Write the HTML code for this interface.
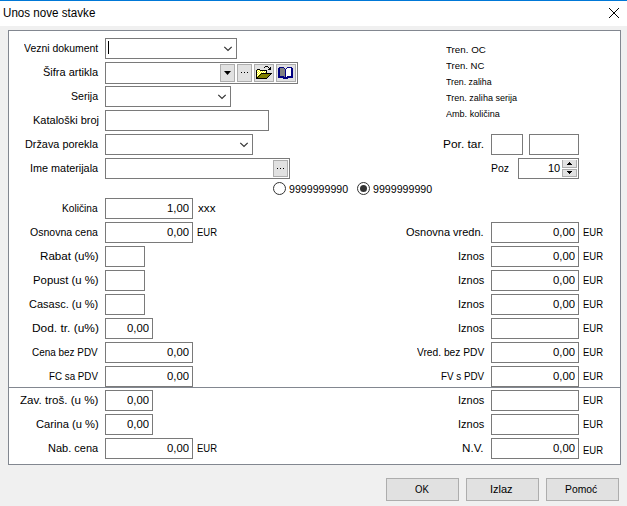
<!DOCTYPE html><html><head><meta charset="utf-8"><style>

*{margin:0;padding:0;box-sizing:border-box}
html,body{width:627px;height:506px;overflow:hidden;background:#f0f0f0;font-family:"Liberation Sans",sans-serif;color:#000}
.abs{position:absolute}
.t{position:absolute;white-space:nowrap;transform-origin:0 0}
.inp{position:absolute;background:#fff;border:1px solid #7a7a7a}
.btn{position:absolute;background:#e1e1e1;border:1px solid #adadad}
.dot{position:absolute;width:1px;height:1px;background:#000}

</style></head><body>
<div class="abs" style="left:0;top:0;width:627px;height:1px;background:#0078d7"></div>
<div class="abs" style="left:0;top:1px;width:627px;height:25px;background:#fff"></div>
<svg class="abs" style="left:609px;top:8px" width="10" height="10" viewBox="0 0 10 10" shape-rendering="crispEdges"><path fill="#000000" d="M0 0h1v1h-1zM1 1h1v1h-1zM2 2h1v1h-1zM3 3h1v1h-1zM4 4h1v1h-1zM5 5h1v1h-1zM6 6h1v1h-1zM7 7h1v1h-1zM8 8h1v1h-1zM9 9h1v1h-1zM9 0h1v1h-1zM8 1h1v1h-1zM7 2h1v1h-1zM6 3h1v1h-1zM5 4h1v1h-1zM4 5h1v1h-1zM3 6h1v1h-1zM2 7h1v1h-1zM1 8h1v1h-1zM0 9h1v1h-1z"/></svg>
<div class="abs" style="left:8px;top:30px;width:613px;height:435px;background:#fff;border:1px solid #828790"></div>
<div class="abs" style="left:8px;top:387px;width:613px;height:1px;background:#828790"></div>
<div class="inp" style="left:105px;top:38px;width:132px;height:21px"></div>
<div class="abs" style="left:108px;top:41px;width:1px;height:13px;background:#000"></div>
<svg class="abs" style="left:223px;top:45px" width="11" height="7" viewBox="0 0 11 7"><path d="M1.3 1.8L5 5.5L8.7 1.8" stroke="#333" stroke-width="1.2" fill="none"/></svg>
<div class="inp" style="left:105px;top:62px;width:193px;height:22px"></div>
<div class="btn" style="left:220px;top:64px;width:15px;height:18px"></div>
<svg class="abs" style="left:224px;top:71px" width="8" height="5" viewBox="0 0 8 5"><path d="M0 0H7L3.5 4Z" fill="#000"/></svg>
<div class="btn" style="left:237px;top:64px;width:15px;height:18px"></div>
<div class="dot" style="left:241px;top:72px"></div>
<div class="dot" style="left:244px;top:72px"></div>
<div class="dot" style="left:247px;top:72px"></div>
<div class="btn" style="left:254px;top:64px;width:20px;height:18px"></div>
<svg class="abs" style="left:255px;top:65px" width="17" height="15" viewBox="0 0 17 15" shape-rendering="crispEdges"><path fill="#000000" d="M2 4h1v1h-1zM3 4h1v1h-1zM4 4h1v1h-1zM1 5h1v1h-1zM5 5h1v1h-1zM6 5h1v1h-1zM7 5h1v1h-1zM8 5h1v1h-1zM9 5h1v1h-1zM10 5h1v1h-1zM11 5h1v1h-1zM1 6h1v1h-1zM11 6h1v1h-1zM1 7h1v1h-1zM11 7h1v1h-1zM1 8h1v1h-1zM6 8h1v1h-1zM7 8h1v1h-1zM8 8h1v1h-1zM9 8h1v1h-1zM10 8h1v1h-1zM11 8h1v1h-1zM12 8h1v1h-1zM13 8h1v1h-1zM14 8h1v1h-1zM15 8h1v1h-1zM16 8h1v1h-1zM1 9h1v1h-1zM5 9h1v1h-1zM15 9h1v1h-1zM1 10h1v1h-1zM4 10h1v1h-1zM14 10h1v1h-1zM1 11h1v1h-1zM3 11h1v1h-1zM13 11h1v1h-1zM1 12h1v1h-1zM2 12h1v1h-1zM12 12h1v1h-1zM1 13h1v1h-1zM2 13h1v1h-1zM3 13h1v1h-1zM4 13h1v1h-1zM5 13h1v1h-1zM6 13h1v1h-1zM7 13h1v1h-1zM8 13h1v1h-1zM9 13h1v1h-1zM10 13h1v1h-1zM11 13h1v1h-1zM10 1h1v1h-1zM11 1h1v1h-1zM12 1h1v1h-1zM9 2h1v1h-1zM13 2h1v1h-1zM15 2h1v1h-1zM14 3h1v1h-1zM15 3h1v1h-1zM13 4h1v1h-1zM14 4h1v1h-1zM15 4h1v1h-1z"/><path fill="#808000" d="M6 9h1v1h-1zM7 9h1v1h-1zM8 9h1v1h-1zM9 9h1v1h-1zM10 9h1v1h-1zM11 9h1v1h-1zM12 9h1v1h-1zM13 9h1v1h-1zM14 9h1v1h-1zM5 10h1v1h-1zM6 10h1v1h-1zM7 10h1v1h-1zM8 10h1v1h-1zM9 10h1v1h-1zM10 10h1v1h-1zM11 10h1v1h-1zM12 10h1v1h-1zM13 10h1v1h-1zM4 11h1v1h-1zM5 11h1v1h-1zM6 11h1v1h-1zM7 11h1v1h-1zM8 11h1v1h-1zM9 11h1v1h-1zM10 11h1v1h-1zM11 11h1v1h-1zM12 11h1v1h-1zM3 12h1v1h-1zM4 12h1v1h-1zM5 12h1v1h-1zM6 12h1v1h-1zM7 12h1v1h-1zM8 12h1v1h-1zM9 12h1v1h-1zM10 12h1v1h-1zM11 12h1v1h-1z"/><path fill="#ffff00" d="M2 5h1v1h-1zM4 5h1v1h-1zM3 6h1v1h-1zM5 6h1v1h-1zM7 6h1v1h-1zM9 6h1v1h-1zM2 7h1v1h-1zM4 7h1v1h-1zM6 7h1v1h-1zM8 7h1v1h-1zM10 7h1v1h-1zM3 8h1v1h-1zM5 8h1v1h-1zM2 9h1v1h-1zM4 9h1v1h-1zM3 10h1v1h-1zM2 11h1v1h-1z"/><path fill="#ffffff" d="M3 5h1v1h-1zM2 6h1v1h-1zM4 6h1v1h-1zM6 6h1v1h-1zM8 6h1v1h-1zM10 6h1v1h-1zM3 7h1v1h-1zM5 7h1v1h-1zM7 7h1v1h-1zM9 7h1v1h-1zM2 8h1v1h-1zM4 8h1v1h-1zM3 9h1v1h-1zM2 10h1v1h-1z"/></svg>
<div class="btn" style="left:276px;top:64px;width:20px;height:18px"></div>
<svg class="abs" style="left:277px;top:66px" width="17" height="14" viewBox="0 0 17 14" shape-rendering="crispEdges"><path fill="#000080" d="M2 1h1v1h-1zM3 1h1v1h-1zM4 1h1v1h-1zM5 1h1v1h-1zM6 1h1v1h-1zM10 1h1v1h-1zM11 1h1v1h-1zM12 1h1v1h-1zM13 1h1v1h-1zM14 1h1v1h-1zM1 2h1v1h-1zM2 2h1v1h-1zM7 2h1v1h-1zM9 2h1v1h-1zM14 2h1v1h-1zM15 2h1v1h-1zM1 3h1v1h-1zM2 3h1v1h-1zM8 3h1v1h-1zM14 3h1v1h-1zM15 3h1v1h-1zM1 4h1v1h-1zM2 4h1v1h-1zM8 4h1v1h-1zM14 4h1v1h-1zM15 4h1v1h-1zM1 5h1v1h-1zM2 5h1v1h-1zM8 5h1v1h-1zM14 5h1v1h-1zM15 5h1v1h-1zM1 6h1v1h-1zM2 6h1v1h-1zM8 6h1v1h-1zM14 6h1v1h-1zM15 6h1v1h-1zM1 7h1v1h-1zM2 7h1v1h-1zM8 7h1v1h-1zM14 7h1v1h-1zM15 7h1v1h-1zM1 8h1v1h-1zM2 8h1v1h-1zM8 8h1v1h-1zM14 8h1v1h-1zM15 8h1v1h-1zM1 9h1v1h-1zM2 9h1v1h-1zM8 9h1v1h-1zM14 9h1v1h-1zM15 9h1v1h-1zM1 10h1v1h-1zM2 10h1v1h-1zM3 10h1v1h-1zM4 10h1v1h-1zM5 10h1v1h-1zM6 10h1v1h-1zM8 10h1v1h-1zM10 10h1v1h-1zM11 10h1v1h-1zM12 10h1v1h-1zM13 10h1v1h-1zM14 10h1v1h-1zM15 10h1v1h-1zM1 11h1v1h-1zM2 11h1v1h-1zM3 11h1v1h-1zM4 11h1v1h-1zM5 11h1v1h-1zM6 11h1v1h-1zM7 11h1v1h-1zM8 11h1v1h-1zM9 11h1v1h-1zM10 11h1v1h-1zM11 11h1v1h-1zM12 11h1v1h-1zM13 11h1v1h-1zM14 11h1v1h-1zM15 11h1v1h-1zM6 12h1v1h-1zM7 12h1v1h-1zM8 12h1v1h-1zM9 12h1v1h-1zM10 12h1v1h-1z"/><path fill="#808080" d="M3 2h1v1h-1zM4 2h1v1h-1zM5 2h1v1h-1zM6 2h1v1h-1zM3 3h1v1h-1zM4 3h1v1h-1zM5 3h1v1h-1zM6 3h1v1h-1zM7 3h1v1h-1zM3 4h1v1h-1zM4 4h1v1h-1zM5 4h1v1h-1zM6 4h1v1h-1zM7 4h1v1h-1zM3 5h1v1h-1zM4 5h1v1h-1zM5 5h1v1h-1zM6 5h1v1h-1zM7 5h1v1h-1zM3 6h1v1h-1zM4 6h1v1h-1zM5 6h1v1h-1zM6 6h1v1h-1zM7 6h1v1h-1zM3 7h1v1h-1zM4 7h1v1h-1zM5 7h1v1h-1zM6 7h1v1h-1zM7 7h1v1h-1zM3 8h1v1h-1zM4 8h1v1h-1zM5 8h1v1h-1zM6 8h1v1h-1zM7 8h1v1h-1zM3 9h1v1h-1zM4 9h1v1h-1zM5 9h1v1h-1zM6 9h1v1h-1zM7 9h1v1h-1zM7 10h1v1h-1z"/><path fill="#ffffff" d="M10 2h1v1h-1zM11 2h1v1h-1zM12 2h1v1h-1zM13 2h1v1h-1zM9 3h1v1h-1zM10 3h1v1h-1zM11 3h1v1h-1zM12 3h1v1h-1zM13 3h1v1h-1zM9 4h1v1h-1zM10 4h1v1h-1zM11 4h1v1h-1zM12 4h1v1h-1zM13 4h1v1h-1zM9 5h1v1h-1zM10 5h1v1h-1zM11 5h1v1h-1zM12 5h1v1h-1zM13 5h1v1h-1zM9 6h1v1h-1zM10 6h1v1h-1zM11 6h1v1h-1zM12 6h1v1h-1zM13 6h1v1h-1zM9 7h1v1h-1zM10 7h1v1h-1zM11 7h1v1h-1zM12 7h1v1h-1zM13 7h1v1h-1zM9 8h1v1h-1zM10 8h1v1h-1zM11 8h1v1h-1zM12 8h1v1h-1zM13 8h1v1h-1zM9 9h1v1h-1zM10 9h1v1h-1zM11 9h1v1h-1zM12 9h1v1h-1zM13 9h1v1h-1zM9 10h1v1h-1z"/></svg>
<div class="inp" style="left:105px;top:86px;width:126px;height:21px"></div>
<svg class="abs" style="left:217px;top:93px" width="11" height="7" viewBox="0 0 11 7"><path d="M1.3 1.8L5 5.5L8.7 1.8" stroke="#333" stroke-width="1.2" fill="none"/></svg>
<div class="inp" style="left:105px;top:110px;width:164px;height:21px"></div>
<div class="inp" style="left:105px;top:134px;width:148px;height:21px"></div>
<svg class="abs" style="left:239px;top:141px" width="11" height="7" viewBox="0 0 11 7"><path d="M1.3 1.8L5 5.5L8.7 1.8" stroke="#333" stroke-width="1.2" fill="none"/></svg>
<div class="inp" style="left:105px;top:158px;width:185px;height:21px"></div>
<div class="btn" style="left:273px;top:160px;width:15px;height:17px"></div>
<div class="dot" style="left:277px;top:168px"></div>
<div class="dot" style="left:280px;top:168px"></div>
<div class="dot" style="left:283px;top:168px"></div>
<svg class="abs" style="left:272px;top:181px" width="15" height="15" viewBox="0 0 15 15"><circle cx="7.5" cy="7.5" r="6" stroke="#333" stroke-width="1" fill="#fff"/></svg>
<svg class="abs" style="left:356px;top:181px" width="15" height="15" viewBox="0 0 15 15"><circle cx="7.5" cy="7.5" r="6" stroke="#333" stroke-width="1" fill="#fff"/><circle cx="7.5" cy="7.5" r="3.5" fill="#333"/></svg>
<div class="inp" style="left:491px;top:134px;width:32px;height:21px"></div>
<div class="inp" style="left:529px;top:134px;width:50px;height:21px"></div>
<div class="inp" style="left:518px;top:158px;width:61px;height:21px"></div>
<div class="t" style="left:548px;top:158px;font-size:11px;line-height:21px">10</div>
<div class="btn" style="left:562px;top:160px;width:15px;height:8px;border-top:none"></div>
<div class="btn" style="left:562px;top:169px;width:15px;height:8px"></div>
<svg class="abs" style="left:567px;top:162px" width="5" height="12" viewBox="0 0 5 12" shape-rendering="crispEdges"><path fill="#000000" d="M2 0h1v1h-1zM1 1h1v1h-1zM2 1h1v1h-1zM3 1h1v1h-1zM0 2h1v1h-1zM1 2h1v1h-1zM2 2h1v1h-1zM3 2h1v1h-1zM4 2h1v1h-1zM0 9h1v1h-1zM1 9h1v1h-1zM2 9h1v1h-1zM3 9h1v1h-1zM4 9h1v1h-1zM1 10h1v1h-1zM2 10h1v1h-1zM3 10h1v1h-1zM2 11h1v1h-1z"/></svg>
<div class="inp" style="left:105px;top:198px;width:88px;height:21px"></div>
<div class="t" style="left:128.4px;width:61px;text-align:right;top:198px;font-size:11px;line-height:21px;transform-origin:100% 0;transform:scaleX(1.03)">1,00</div>
<div class="inp" style="left:105px;top:222px;width:88px;height:21px"></div>
<div class="t" style="left:128.4px;width:61px;text-align:right;top:222px;font-size:11px;line-height:21px;transform-origin:100% 0;transform:scaleX(1.03)">0,00</div>
<div class="inp" style="left:105px;top:246px;width:40px;height:21px"></div>
<div class="inp" style="left:105px;top:270px;width:40px;height:21px"></div>
<div class="inp" style="left:105px;top:294px;width:40px;height:21px"></div>
<div class="inp" style="left:105px;top:318px;width:48px;height:21px"></div>
<div class="t" style="left:88.4px;width:61px;text-align:right;top:318px;font-size:11px;line-height:21px;transform-origin:100% 0;transform:scaleX(1.03)">0,00</div>
<div class="inp" style="left:105px;top:342px;width:88px;height:21px"></div>
<div class="t" style="left:128.4px;width:61px;text-align:right;top:342px;font-size:11px;line-height:21px;transform-origin:100% 0;transform:scaleX(1.03)">0,00</div>
<div class="inp" style="left:105px;top:366px;width:88px;height:21px"></div>
<div class="t" style="left:128.4px;width:61px;text-align:right;top:366px;font-size:11px;line-height:21px;transform-origin:100% 0;transform:scaleX(1.03)">0,00</div>
<div class="inp" style="left:105px;top:390px;width:48px;height:21px"></div>
<div class="t" style="left:88.4px;width:61px;text-align:right;top:390px;font-size:11px;line-height:21px;transform-origin:100% 0;transform:scaleX(1.03)">0,00</div>
<div class="inp" style="left:105px;top:414px;width:48px;height:21px"></div>
<div class="t" style="left:88.4px;width:61px;text-align:right;top:414px;font-size:11px;line-height:21px;transform-origin:100% 0;transform:scaleX(1.03)">0,00</div>
<div class="inp" style="left:105px;top:438px;width:88px;height:21px"></div>
<div class="t" style="left:128.4px;width:61px;text-align:right;top:438px;font-size:11px;line-height:21px;transform-origin:100% 0;transform:scaleX(1.03)">0,00</div>
<div class="inp" style="left:491px;top:222px;width:88px;height:21px"></div>
<div class="t" style="left:514.4px;width:61px;text-align:right;top:222px;font-size:11px;line-height:21px;transform-origin:100% 0;transform:scaleX(1.03)">0,00</div>
<div class="inp" style="left:491px;top:246px;width:88px;height:21px"></div>
<div class="t" style="left:514.4px;width:61px;text-align:right;top:246px;font-size:11px;line-height:21px;transform-origin:100% 0;transform:scaleX(1.03)">0,00</div>
<div class="inp" style="left:491px;top:270px;width:88px;height:21px"></div>
<div class="t" style="left:514.4px;width:61px;text-align:right;top:270px;font-size:11px;line-height:21px;transform-origin:100% 0;transform:scaleX(1.03)">0,00</div>
<div class="inp" style="left:491px;top:294px;width:88px;height:21px"></div>
<div class="t" style="left:514.4px;width:61px;text-align:right;top:294px;font-size:11px;line-height:21px;transform-origin:100% 0;transform:scaleX(1.03)">0,00</div>
<div class="inp" style="left:491px;top:318px;width:88px;height:21px"></div>
<div class="inp" style="left:491px;top:342px;width:88px;height:21px"></div>
<div class="t" style="left:514.4px;width:61px;text-align:right;top:342px;font-size:11px;line-height:21px;transform-origin:100% 0;transform:scaleX(1.03)">0,00</div>
<div class="inp" style="left:491px;top:366px;width:88px;height:21px"></div>
<div class="t" style="left:514.4px;width:61px;text-align:right;top:366px;font-size:11px;line-height:21px;transform-origin:100% 0;transform:scaleX(1.03)">0,00</div>
<div class="inp" style="left:491px;top:390px;width:88px;height:21px"></div>
<div class="inp" style="left:491px;top:414px;width:88px;height:21px"></div>
<div class="inp" style="left:491px;top:438px;width:88px;height:21px"></div>
<div class="t" style="left:514.4px;width:61px;text-align:right;top:438px;font-size:11px;line-height:21px;transform-origin:100% 0;transform:scaleX(1.03)">0,00</div>
<div class="btn" style="left:386px;top:478px;width:73px;height:23px"></div>
<div class="btn" style="left:466px;top:478px;width:73px;height:23px"></div>
<div class="btn" style="left:546px;top:478px;width:73px;height:23px"></div>
<div class="t" style="left:24.00px;top:38px;font-size:11px;line-height:21px;transform:scaleX(0.9487)">Vezni dokument</div>
<div class="t" style="left:43.00px;top:62px;font-size:11px;line-height:21px;transform:scaleX(1.0000)">&#352;ifra artikla</div>
<div class="t" style="left:71.04px;top:86px;font-size:11px;line-height:21px;transform:scaleX(0.9630)">Serija</div>
<div class="t" style="left:33.00px;top:110px;font-size:11px;line-height:21px;transform:scaleX(1.0000)">Katalo&#353;ki broj</div>
<div class="t" style="left:25.01px;top:134px;font-size:11px;line-height:21px;transform:scaleX(0.9863)">Dr&#382;ava porekla</div>
<div class="t" style="left:30.01px;top:158px;font-size:11px;line-height:21px;transform:scaleX(0.9853)">Ime materijala</div>
<div class="t" style="left:62.08px;top:198px;font-size:11px;line-height:21px;transform:scaleX(0.9226)">Koli&#269;ina</div>
<div class="t" style="left:30.00px;top:222px;font-size:11px;line-height:21px;transform:scaleX(0.9577)">Osnovna cena</div>
<div class="t" style="left:39.94px;top:246px;font-size:11px;line-height:21px;transform:scaleX(1.0556)">Rabat (u%)</div>
<div class="t" style="left:32.97px;top:270px;font-size:11px;line-height:21px;transform:scaleX(1.0323)">Popust (u %)</div>
<div class="t" style="left:29.00px;top:294px;font-size:11px;line-height:21px;transform:scaleX(1.0000)">Casasc. (u %)</div>
<div class="t" style="left:31.92px;top:318px;font-size:11px;line-height:21px;transform:scaleX(1.0833)">Dod. tr. (u%)</div>
<div class="t" style="left:32.08px;top:342px;font-size:11px;line-height:21px;transform:scaleX(0.9030)">Cena bez PDV</div>
<div class="t" style="left:49.11px;top:366px;font-size:11px;line-height:21px;transform:scaleX(0.8889)">FC sa PDV</div>
<div class="t" style="left:20.00px;top:390px;font-size:11px;line-height:21px;transform:scaleX(1.0541)">Zav. tro&#353;. (u %)</div>
<div class="t" style="left:35.98px;top:414px;font-size:11px;line-height:21px;transform:scaleX(1.0167)">Carina (u %)</div>
<div class="t" style="left:48.00px;top:438px;font-size:11px;line-height:21px;transform:scaleX(1.0000)">Nab. cena</div>
<div class="t" style="left:406.00px;top:222px;font-size:11px;line-height:21px;transform:scaleX(1.0000)">Osnovna vredn.</div>
<div class="t" style="left:458.00px;top:246px;font-size:11px;line-height:21px;transform:scaleX(1.0000)">Iznos</div>
<div class="t" style="left:458.00px;top:270px;font-size:11px;line-height:21px;transform:scaleX(1.0000)">Iznos</div>
<div class="t" style="left:458.00px;top:294px;font-size:11px;line-height:21px;transform:scaleX(1.0000)">Iznos</div>
<div class="t" style="left:458.00px;top:318px;font-size:11px;line-height:21px;transform:scaleX(1.0000)">Iznos</div>
<div class="t" style="left:417.00px;top:342px;font-size:11px;line-height:21px;transform:scaleX(0.9306)">Vred. bez PDV</div>
<div class="t" style="left:441.11px;top:366px;font-size:11px;line-height:21px;transform:scaleX(0.8936)">FV s PDV</div>
<div class="t" style="left:458.00px;top:390px;font-size:11px;line-height:21px;transform:scaleX(1.0000)">Iznos</div>
<div class="t" style="left:458.00px;top:414px;font-size:11px;line-height:21px;transform:scaleX(1.0000)">Iznos</div>
<div class="t" style="left:461.94px;top:438px;font-size:11px;line-height:21px;transform:scaleX(1.0582)">N.V.</div>
<div class="t" style="left:583.14px;top:222px;font-size:11px;line-height:21px;transform:scaleX(0.8636)">EUR</div>
<div class="t" style="left:583.14px;top:246px;font-size:11px;line-height:21px;transform:scaleX(0.8636)">EUR</div>
<div class="t" style="left:583.14px;top:270px;font-size:11px;line-height:21px;transform:scaleX(0.8636)">EUR</div>
<div class="t" style="left:583.14px;top:294px;font-size:11px;line-height:21px;transform:scaleX(0.8636)">EUR</div>
<div class="t" style="left:583.14px;top:318px;font-size:11px;line-height:21px;transform:scaleX(0.8636)">EUR</div>
<div class="t" style="left:583.14px;top:342px;font-size:11px;line-height:21px;transform:scaleX(0.8636)">EUR</div>
<div class="t" style="left:583.14px;top:366px;font-size:11px;line-height:21px;transform:scaleX(0.8636)">EUR</div>
<div class="t" style="left:583.14px;top:390px;font-size:11px;line-height:21px;transform:scaleX(0.8636)">EUR</div>
<div class="t" style="left:583.14px;top:414px;font-size:11px;line-height:21px;transform:scaleX(0.8636)">EUR</div>
<div class="t" style="left:583.14px;top:439.5px;font-size:11px;line-height:21px;transform:scaleX(0.8636)">EUR</div>
<div class="t" style="left:198.00px;top:198px;font-size:11px;line-height:21px;transform:scaleX(1.0625)">xxx</div>
<div class="t" style="left:197.14px;top:222px;font-size:11px;line-height:21px;transform:scaleX(0.8636)">EUR</div>
<div class="t" style="left:197.14px;top:438px;font-size:11px;line-height:21px;transform:scaleX(0.8636)">EUR</div>
<div class="t" style="left:442.92px;top:134px;font-size:11px;line-height:21px;transform:scaleX(1.0833)">Por. tar.</div>
<div class="t" style="left:491.06px;top:158px;font-size:11px;line-height:21px;transform:scaleX(0.9510)">Poz</div>
<div class="t" style="left:289.02px;top:179px;font-size:11px;line-height:21px;transform:scaleX(0.9669)">9999999990</div>
<div class="t" style="left:373.02px;top:179px;font-size:11px;line-height:21px;transform:scaleX(0.9669)">9999999990</div>
<div class="t" style="left:415.00px;top:479px;font-size:11px;line-height:21px;transform:scaleX(0.8711)">OK</div>
<div class="t" style="left:490.00px;top:479px;font-size:11px;line-height:21px;transform:scaleX(1.0000)">Izlaz</div>
<div class="t" style="left:565.06px;top:479px;font-size:11px;line-height:21px;transform:scaleX(0.9394)">Pomo&#263;</div>
<div class="t" style="left:446.00px;top:41.5px;font-size:9.5px;line-height:16px;transform:scaleX(1.0277)">Tren. OC</div>
<div class="t" style="left:446.00px;top:57.5px;font-size:9.5px;line-height:16px;transform:scaleX(1.0028)">Tren. NC</div>
<div class="t" style="left:446.00px;top:73.5px;font-size:9.5px;line-height:16px;transform:scaleX(0.9248)">Tren. zaliha</div>
<div class="t" style="left:446.00px;top:89.5px;font-size:9.5px;line-height:16px;transform:scaleX(0.9525)">Tren. zaliha serija</div>
<div class="t" style="left:446.00px;top:105.5px;font-size:9.5px;line-height:16px;transform:scaleX(0.9533)">Amb. koli&#269;ina</div>
<div class="t" style="left:3.03px;top:5px;font-size:12px;line-height:16px;transform:scaleX(0.9681)">Unos nove stavke</div>
</body></html>
